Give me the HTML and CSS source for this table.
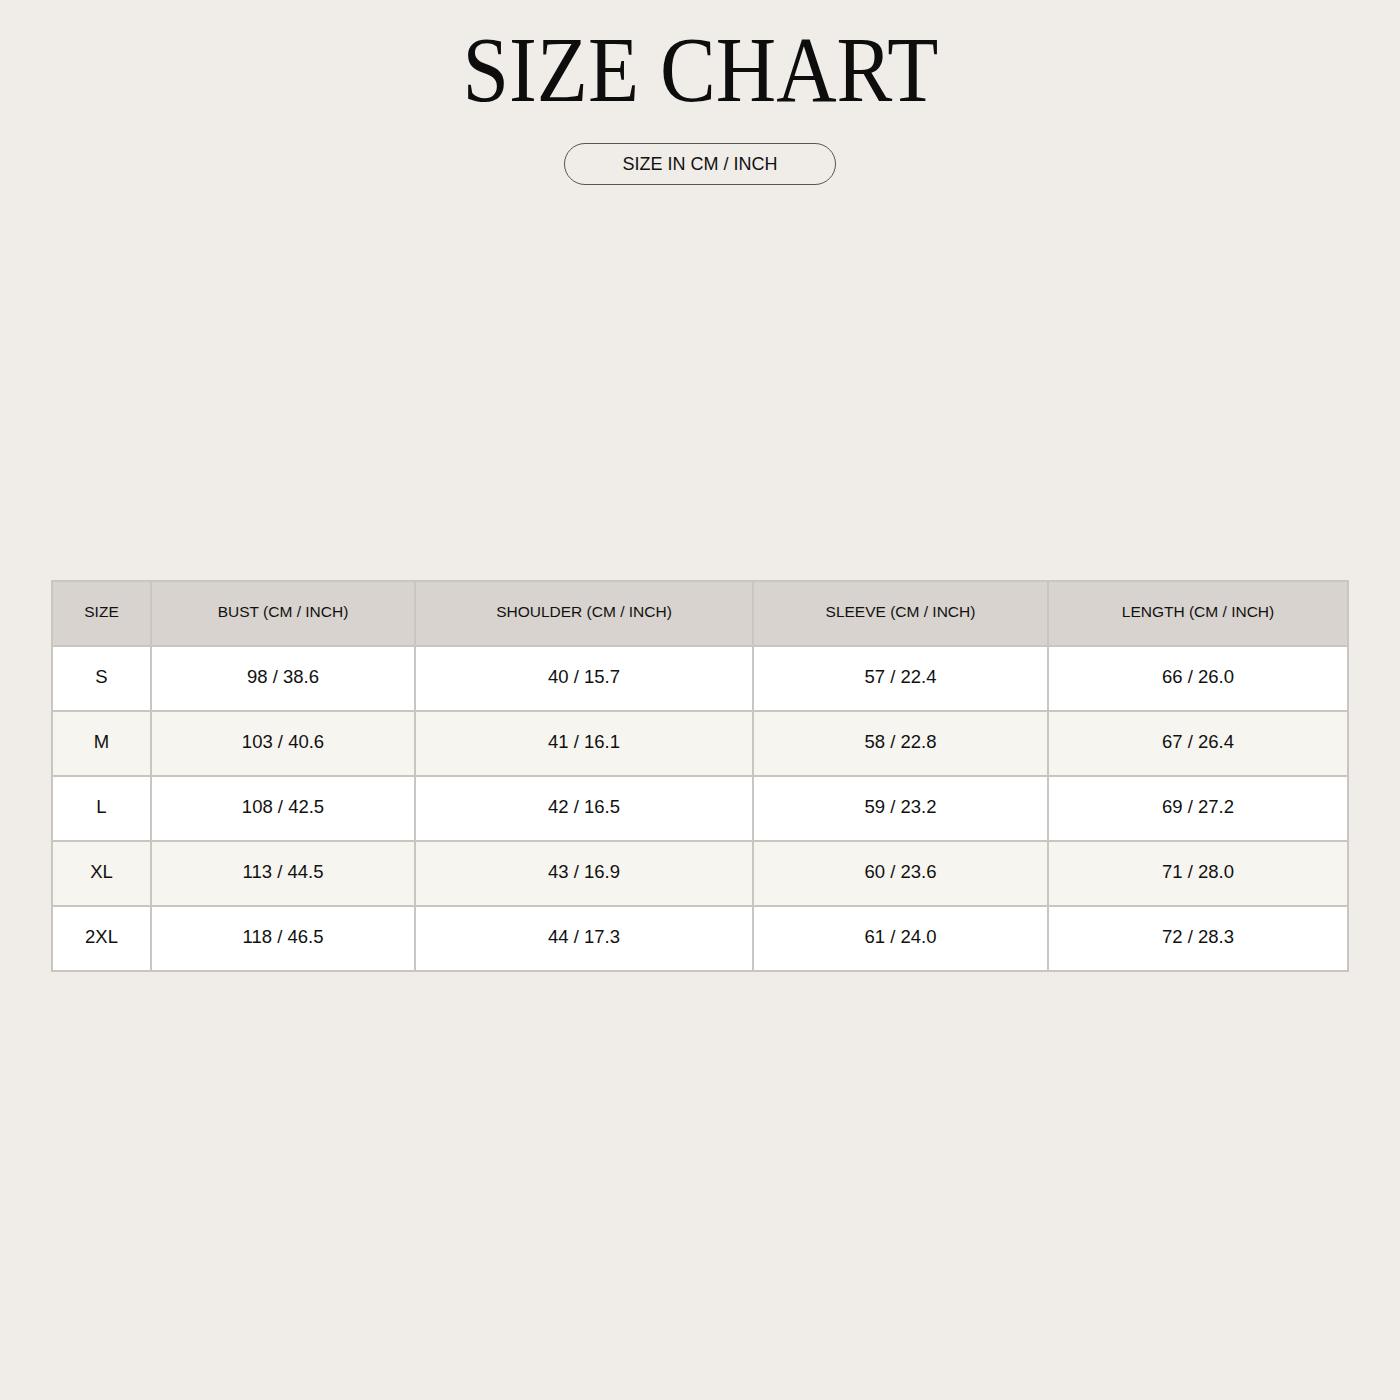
FILE: index.html
```html
<!DOCTYPE html>
<html>
<head>
<meta charset="utf-8">
<link rel="stylesheet" href="styles.css">
</head>
<body>
<div class="page">
  <h1 class="title">SIZE CHART</h1>
  <div class="pill">SIZE IN CM / INCH</div>
  <table class="chart">
    <colgroup>
      <col class="c1"><col class="c2"><col class="c3"><col class="c4"><col class="c5">
    </colgroup>
    <thead>
      <tr><th>SIZE</th><th>BUST (CM / INCH)</th><th>SHOULDER (CM / INCH)</th><th>SLEEVE (CM / INCH)</th><th>LENGTH (CM / INCH)</th></tr>
    </thead>
    <tbody>
      <tr><td>S</td><td>98 / 38.6</td><td>40 / 15.7</td><td>57 / 22.4</td><td>66 / 26.0</td></tr>
      <tr><td>M</td><td>103 / 40.6</td><td>41 / 16.1</td><td>58 / 22.8</td><td>67 / 26.4</td></tr>
      <tr><td>L</td><td>108 / 42.5</td><td>42 / 16.5</td><td>59 / 23.2</td><td>69 / 27.2</td></tr>
      <tr><td>XL</td><td>113 / 44.5</td><td>43 / 16.9</td><td>60 / 23.6</td><td>71 / 28.0</td></tr>
      <tr><td>2XL</td><td>118 / 46.5</td><td>44 / 17.3</td><td>61 / 24.0</td><td>72 / 28.3</td></tr>
    </tbody>
  </table>
</div>
</body>
</html>
```
FILE: styles.css
```css
html, body {
  margin: 0;
  padding: 0;
  background: #f0ede8;
}
.page {
  width: 1400px;
  height: 1400px;
  display: flex;
  flex-direction: column;
  align-items: center;
  padding-top: 22px;
  box-sizing: border-box;
  font-family: "Liberation Sans", Arial, sans-serif;
  color: #111;
}
.title {
  margin: 0;
  font-family: "Liberation Serif", "Times New Roman", serif;
  font-weight: 400;
  font-size: 94px;
  line-height: 1;
  color: #0d0d0d;
  transform: scaleX(0.89);
  white-space: nowrap;
}
.pill {
  margin-top: 27px;
  width: 272px;
  height: 42px;
  box-sizing: border-box;
  border: 1px solid #555;
  border-radius: 21px;
  display: flex;
  align-items: center;
  justify-content: center;
  font-size: 18px;
  color: #111;
}
.chart {
  margin-top: 395px;
  width: 1296px;
  border-collapse: collapse;
  table-layout: fixed;
  border: 2px solid #c9c5c0;
}
.c1 { width: 99px; }
.c2 { width: 264px; }
.c3 { width: 338px; }
.c4 { width: 295px; }
.c5 { width: 300px; }
.chart th, .chart td {
  border: 2px solid #c9c5c0;
  text-align: center;
  padding: 0 0 3px;
  height: 60px;
}
.chart th {
  background: #d8d3ce;
  font-weight: 400;
  font-size: 15.5px;
  color: #111;
}
.chart td {
  font-size: 18.5px;
  color: #111;
}
.chart tbody tr:nth-child(odd) td { background: #ffffff; }
.chart tbody tr:nth-child(even) td { background: #f7f5f0; }
```
